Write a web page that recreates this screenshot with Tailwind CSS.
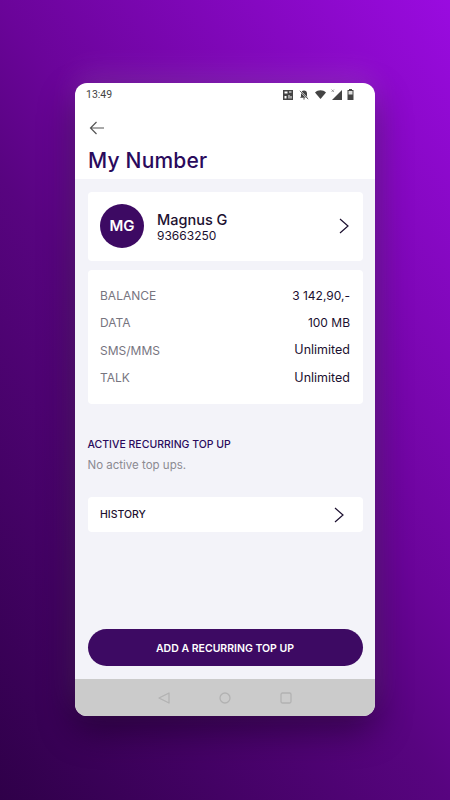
<!DOCTYPE html>
<html lang="en">

<head>
	<meta charset="UTF-8" />
	<meta name="viewport" content="width=device-width, initial-scale=1.0" />
	<title>My Number</title>
	<script src="https://cdn.jsdelivr.net/npm/@tailwindcss/browser@4"></script>
</head>

<body class="h-[800px] overflow-hidden bg-[linear-gradient(54deg,#2f0049,#580480_44%,#6a0499_56%,#9a0be0)] font-['Inter',sans-serif]">
	<div class="pt-[83px] flex justify-center">
		<div class="w-[300px] h-[633px] rounded-[12px] overflow-hidden flex flex-col bg-white shadow-[0_-12px_30px_rgba(255,255,255,0.1),0_14px_36px_rgba(0,0,0,0.4)]">
			<!-- status bar -->
			<div class="h-[21px] pt-[2px] flex items-center justify-between pl-[11px] pr-[21px] text-[#444] font-['Roboto',sans-serif] text-[10.5px]">
				<span>13:49</span>
				<div class="flex items-center gap-[5px]">
					<svg width="10" height="10" viewBox="0 0 10 10" fill="#444"><path d="M0 0h10v10H0z" /><path d="M1.5 1.5h3v2h-3zM6 1.5h2.500v1H6zM1.500 6h2v2.500h-2zM5.500 5h1v3.500h-1zM7.500 6h1v2.500h-1z" fill="#fff" /></svg>
					<svg class="ml-[1px]" width="10" height="10" viewBox="0 0 10 10" fill="#444"><path d="M5 0.500c-1.800 0-3 1.300-3 3v3l-1 1.200h8L8 6.500v-3c0-1.700-1.200-3-3-3zM4 8.500h2a1 1 0 0 1-2 0z" /><path d="M0.800 0.800l8.400 8.400" stroke="#fff" stroke-width="1.600" /><path d="M0.800 0.800l8.400 8.400" stroke="#444" stroke-width=".8" /></svg>
					<svg class="ml-[1px]" width="11" height="9" viewBox="0 0 11 9" fill="#444"><path d="M0 2.500C3 -0.600 8 -0.600 11 2.500L5.500 9z" /></svg>
					<svg width="11" height="11" viewBox="0 0 11 11" fill="#444"><path d="M11 1v10H1z" /><path d="M0.500 0.500l2.500 2.500M3 0.500L0.500 3" stroke="#666" stroke-width=".6" /></svg>
					<svg width="7" height="11" viewBox="0 0 7 11" fill="#444"><path d="M2 0h3v1h1.500v10H.5V1H2z" /><path d="M1.500 2h4v3.500h-4z" fill="#ddd" /></svg>
				</div>
			</div>

			<!-- header -->
			<div class="h-[75px] px-[13px] flex flex-col">
				<svg class="mt-[17px] ml-[1px] shrink-0" width="16" height="14" viewBox="0 0 16 14" fill="none" stroke="#555" stroke-width="1.200"><path d="M15 7H1.500M7.500 1L1.500 7l6 6" /></svg>
				<h1 class="mt-[13px] text-[21px] leading-[26px] font-medium tracking-[0.2px] text-[#2a0a5c]">My Number</h1>
			</div>

			<!-- content -->
			<div class="flex-1 bg-[#f3f3f9] px-[12.500px] pt-[12.500px] pb-[13px] flex flex-col">
				<div class="h-[69px] bg-white rounded-[4px] flex items-center pl-[12.500px] pr-[14px]">
					<div class="w-[44px] h-[44px] rounded-full bg-[#3d0a63] flex items-center justify-center text-white text-[15px] font-semibold">MG</div>
					<div class="ml-[13px] pt-[2px] flex-1 text-[#1c1030]">
						<div class="text-[14.500px] leading-[17px] font-medium">Magnus G</div>
						<div class="text-[12px] leading-[15px]">93663250</div>
					</div>
					<svg width="10" height="16" viewBox="0 0 10 16" fill="none" stroke="#1c1030" stroke-width="1.200"><path d="M1 1l8 7-8 7" /></svg>
				</div>

				<div class="mt-[9px] h-[134px] bg-white rounded-[4px] px-[12.500px] pt-[13px] text-[12px]">
					<div class="h-[27.300px] flex items-center justify-between"><span class="text-[#77757f]">BALANCE</span><span class="text-[#1c1030]">3 142,90,-</span></div>
					<div class="h-[27.300px] flex items-center justify-between"><span class="text-[#77757f]">DATA</span><span class="text-[#1c1030]">100 MB</span></div>
					<div class="h-[27.300px] flex items-center justify-between"><span class="text-[#77757f]">SMS/MMS</span><span class="text-[#1c1030] text-[12.500px]">Unlimited</span></div>
					<div class="h-[27.300px] flex items-center justify-between"><span class="text-[#77757f]">TALK</span><span class="text-[#1c1030] text-[12.500px]">Unlimited</span></div>
				</div>

				<h2 class="mt-[34px] text-[10.500px] leading-[14px] font-medium text-[#2a0a5c]">ACTIVE RECURRING TOP UP</h2>
				<p class="mt-[6px] text-[11.500px] leading-[15px] text-[#8b8a92]">No active top ups.</p>

				<div class="mt-[24px] h-[35px] pt-[1px] bg-white rounded-[4px] flex items-center justify-between pl-[12.500px] pr-[19px]">
					<span class="text-[10.500px] font-medium text-[#1c1030]">HISTORY</span>
					<svg width="10" height="16" viewBox="0 0 10 16" fill="none" stroke="#1c1030" stroke-width="1.200"><path d="M1 1l8 7-8 7" /></svg>
				</div>

				<button class="mt-auto h-[37.500px] pt-[3px] w-full rounded-full bg-[#3d0a63] text-white text-[10.500px] font-semibold">ADD A RECURRING TOP UP</button>
			</div>

			<!-- nav bar -->
			<div class="h-[37px] bg-[#cbcbcb] flex items-center justify-center gap-[49px]">
				<svg width="12" height="12" viewBox="0 0 12 12" fill="none" stroke="#b2b2b2" stroke-width="1.300"><path d="M11 1v10L1 6z" stroke-linejoin="round" /></svg>
				<svg width="12" height="12" viewBox="0 0 12 12" fill="none" stroke="#b2b2b2" stroke-width="1.300"><circle cx="6" cy="6" r="5" /></svg>
				<svg width="12" height="12" viewBox="0 0 12 12" fill="none" stroke="#b2b2b2" stroke-width="1.300"><rect x="1" y="1" width="10" height="10" rx="1.500" /></svg>
			</div>
		</div>
	</div>
</body>

</html>
